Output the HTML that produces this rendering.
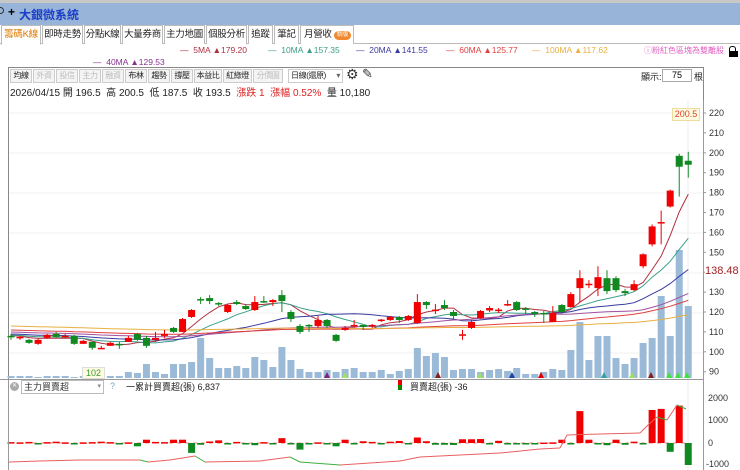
<!DOCTYPE html>
<html><head><meta charset="utf-8">
<style>
*{margin:0;padding:0;box-sizing:border-box}
body{width:740px;height:470px;overflow:hidden;background:#fff;font-family:"Liberation Sans","Noto Sans CJK TC",sans-serif;position:relative}
.a{position:absolute;white-space:nowrap}
#top{left:0;top:0;width:740px;height:3px;background:#c8c8c8}
#bar{left:0;top:3px;width:740px;height:22px;background:#98b4d8}
#tabs{left:0;top:25px;width:740px;height:19px;border-bottom:1px solid #bbb}
.tab{position:absolute;top:25px;height:19px;border:1px solid #bbb;border-bottom:none;font-size:9.5px;line-height:17px;text-align:center;color:#222;background:#fff;white-space:nowrap;overflow:hidden;letter-spacing:-0.3px}
.tb{position:absolute;top:69px;height:14px;border:1px solid #ccc;background:#f4f4f4;font-size:8px;line-height:12px;text-align:center;color:#222;white-space:nowrap;overflow:hidden;letter-spacing:-0.4px}
.tb.d{color:#bbb}
</style></head><body>
<div class="a" id="top"></div>
<div class="a" id="bar"></div>
<div class="a" style="left:-3px;top:7px;width:7px;height:7px;border:1.5px solid #333;border-radius:50%"></div>
<div class="a" style="left:8px;top:5px;font-size:12px;font-weight:bold;color:#000">+</div>
<div class="a" style="left:19px;top:6px;font-size:12px;font-weight:bold;color:#1a3ec8">大銀微系統</div>
<div class="a" id="tabs"></div>
<div class="tab" style="left:1px;width:40px;color:#e07a00;border-bottom:1px solid #fff;height:20px">籌碼K線</div>
<div class="tab" style="left:42px;width:41px">即時走勢</div>
<div class="tab" style="left:84px;width:37px">分點K線</div>
<div class="tab" style="left:122px;width:41px">大量券商</div>
<div class="tab" style="left:164px;width:41px">主力地圖</div>
<div class="tab" style="left:206px;width:41px">個股分析</div>
<div class="tab" style="left:248px;width:25px">追蹤</div>
<div class="tab" style="left:274px;width:25px">筆記</div>
<div class="tab" style="left:300px;width:54px;text-align:left;padding-left:3px">月營收<span style="display:inline-block;background:#f08a30;color:#fff;font-size:6px;line-height:9px;border-radius:5px;padding:0 3px;margin-left:2px;vertical-align:1px">新版</span></div>

<div class="a" style="top:45px;left:180px;font-size:8.5px;color:#b03040">— &nbsp;5MA <span>▲179.20</span></div>
<div class="a" style="top:45px;left:268px;font-size:8.5px;color:#3aa08a">— &nbsp;10MA ▲157.35</div>
<div class="a" style="top:45px;left:356px;font-size:8.5px;color:#3a3aa0">— &nbsp;20MA ▲141.55</div>
<div class="a" style="top:45px;left:446px;font-size:8.5px;color:#e04040">— &nbsp;60MA ▲125.77</div>
<div class="a" style="top:45px;left:532px;font-size:8.5px;color:#e8b040">— &nbsp;100MA ▲117.62</div>
<div class="a" style="top:45px;left:644px;font-size:8px;color:#e060c0">ⓘ粉紅色區塊為雙離股</div>
<div class="a" style="top:46px;left:729px;width:7px;height:6px;border:1.5px solid #000;border-bottom:none;border-radius:3px 3px 0 0"></div>
<div class="a" style="top:51px;left:729px;width:9px;height:6px;background:#000"></div>
<div class="a" style="top:57px;left:93px;font-size:8.5px;color:#8a3090">— &nbsp;40MA ▲129.53</div>

<div class="a" style="left:8px;top:67px;width:696px;height:313px;border:1px solid #888;border-bottom:none"></div>
<div class="tb" style="left:10px;width:22px">均線</div>
<div class="tb d" style="left:33px;width:22px">外資</div>
<div class="tb d" style="left:56px;width:22px">投信</div>
<div class="tb d" style="left:79px;width:22px">主力</div>
<div class="tb d" style="left:102px;width:22px">融資</div>
<div class="tb" style="left:125px;width:22px">布林</div>
<div class="tb" style="left:148px;width:22px">趨勢</div>
<div class="tb" style="left:171px;width:22px">撐壓</div>
<div class="tb" style="left:194px;width:28px">本益比</div>
<div class="tb" style="left:223px;width:29px">紅綠燈</div>
<div class="tb d" style="left:253px;width:30px">分價圖</div>
<div class="tb" style="left:288px;width:55px;background:#fff;text-align:left;padding-left:2px">日線(還原) <span style="float:right;color:#666;padding-right:2px">▾</span></div>
<div class="a" style="left:346px;top:66px;font-size:14px;color:#333">⚙</div>
<div class="a" style="left:362px;top:66px;font-size:13px;color:#333">✎</div>
<div class="a" style="left:641px;top:70px;font-size:9px;color:#222">顯示:</div>
<div class="a" style="left:662px;top:69px;width:30px;height:13px;border:1px solid #aaa;font-size:9px;text-align:center;line-height:11px">75</div>
<div class="a" style="left:694px;top:70px;font-size:9px;color:#222">根</div>
<div class="a" style="left:10px;top:84px;font-size:10px;color:#222">2026/04/15 開 196.5 &nbsp;高 200.5 &nbsp;低 187.5 &nbsp;收 193.5 &nbsp;<span style="color:#e02020">漲跌 1 &nbsp;漲幅 0.52%</span> &nbsp;量 10,180</div>

<svg class="a" style="left:0;top:0" width="740" height="470" id="s"></svg>
<div class="a" style="left:672px;top:108px;width:28px;height:13px;background:#fffbe0;border:1px solid #eedd99;font-size:9px;color:#e04030;text-align:center;line-height:11px">200.5</div>
<div class="a" style="left:705px;top:265px;font-size:11px;color:#a02020;background:#fff">138.48</div>
<div class="a" style="left:82px;top:367px;width:23px;height:12px;background:#fffbe0;border:1px solid #ddd;font-size:9px;color:#389a38;text-align:center;line-height:10px">102</div>

<div class="a" style="left:0;top:379px;width:704px;height:1px;background:#999"></div>
<div class="a" style="left:8px;top:380px;width:1px;height:90px;background:#999"></div>
<div class="a" style="left:703px;top:100px;width:1px;height:370px;background:#999"></div>
<div class="a" style="left:10px;top:382px;width:9px;height:9px;border-radius:50%;background:#aaa;color:#fff;font-size:6px;text-align:center;line-height:9px">✕</div>
<div class="a" style="left:21px;top:380px;width:83px;height:14px;border:1px solid #bbb;font-size:9px;color:#333;line-height:12px;padding-left:2px">主力買賣超<span style="float:right;color:#888;padding-right:2px;font-size:7px">▾</span></div>
<div class="a" style="left:110px;top:381px;font-size:9px;color:#7ab">?</div>
<div class="a" style="left:126px;top:380px;font-size:9px;color:#222">一累計買賣超(張) 6,837</div>
<div class="a" style="left:398px;top:380px;width:4px;height:5px;background:#e00"></div>
<div class="a" style="left:398px;top:385px;width:4px;height:5px;background:#080"></div>
<div class="a" style="left:410px;top:380px;font-size:9px;color:#222">買賣超(張) -36</div>
<div class="a" style="left:708px;top:393px;font-size:9px;color:#333">2000</div>
<div class="a" style="left:708px;top:415px;font-size:9px;color:#333">1000</div>
<div class="a" style="left:708px;top:438px;font-size:9px;color:#333">0</div>
<div class="a" style="left:706px;top:459px;font-size:9px;color:#333">-1000</div>

<script>
var D=[[108,107.5,109,106],[107,107.5,108,106],[106,104.5,106.5,104],[104,106,106.5,103.5],[107,108.5,109,106.5],[109,107.5,110,107],[108,108,109,107],[108,104,108.5,103.5],[104,105.5,106,104],[105,102,105,101],[102,102,103,101.5],[103,104.5,105,103],[104,103.5,105,101.5],[105,107,108,105],[109,106,109.5,105.5],[107,103,108,102],[106,107,110,105],[108,109,111,107],[112,110,112.5,109.5],[110,116.5,117,110],[117.5,121,121.5,117],[126.5,126,127.5,124],[127,125.5,128.5,124],[124.5,124,125,123],[120,123.5,124,119.5],[125,124,126,123.5],[123,121.5,124,121],[121,125,128,120.5],[125.5,125,128,124.5],[125,126,126.5,123],[128.5,125.5,131,120],[120,116.5,121,115],[113,110,114,109],[113.5,113,114,110],[113,116,118,112],[116,113,116.5,112],[108.5,105.5,109,105],[111,112,113,110.5],[113,113.5,116,112.5],[113.5,112.5,113.5,111],[113.5,113.5,114,112],[116,116.2,116.5,115],[116,117.5,118,115.5],[117.5,116,118,114.5],[116,118,118.5,115.5],[114.5,125,129,114],[125,123.5,125.5,121.5],[120.8,121.2,124,119],[123.5,122,126,121],[120,118,121,116],[108.2,108.8,111,106],[112,115,116,111.5],[117,120.5,121,116.5],[120.8,122,123,120],[120.8,121.2,122,119.5],[123.5,124,126,123],[125,121,125.5,120.5],[121.8,121.2,122.5,119],[120,119,120.5,117.5],[119.5,119,120.5,114.5],[115,119.5,123,115],[123.5,120,124,119],[122.5,129,130,122],[132,137,141,125],[133.8,134.2,136,132],[132,137.5,143,128],[137,130.5,141,129],[137,131,138,130],[130.5,129.5,131.5,128],[131,134,136,130.5],[143,149,149.5,142],[154,163,164,153],[164.8,165.2,171,154],[173,181,181.5,172.5],[198.5,193,199.5,178],[196,194,200.5,187.5]];
var V=[376,376,376,377,376,376,376,377,376,376,377,376,376,372,373,364,372,374,364,364,362,338,358,368,368,366,368,357,360,367,347,360,369,372,372,370,372,369,368,372,372,370,374,371,369,348,356,353,357,370,369,369,372,370,369,371,368,374,374,372,369,370,350,322,360,336,336,358,364,358,343,338,296,336,250,306];
var F=[40,30,50,-30,40,60,30,-50,30,40,60,40,-60,30,-150,150,50,40,150,150,-450,-80,70,120,-60,50,-40,-100,40,-20,220,-20,-300,-10,30,-60,-150,150,-40,80,50,-20,60,90,-60,250,80,-80,-80,-90,170,170,180,-10,100,-10,-30,-20,-40,20,30,150,-60,1450,150,-20,-100,150,-80,60,-30,1500,1550,-400,1700,-1000];
var s='',N=D.length,X=function(i){return 11+i*9.03},Y=function(p){return 113+(220-p)*1.99};
for(var g=113;g<=360;g+=40)s+='<line x1="9" x2="703" y1="'+g+'" y2="'+g+'" stroke="#f2f2f2"/>';
s+='<line x1="688" x2="688" y1="100" y2="470" stroke="#eee"/>';
for(var p=220;p>=90;p-=10){if(p!=140)s+='<text x="709" y="'+(Y(p)+3)+'" font-size="9" fill="#333">'+p+'</text>';s+='<line x1="703" x2="706" y1="'+Y(p)+'" y2="'+Y(p)+'" stroke="#999"/>';}
for(var i=0;i<N;i++)s+='<rect x="'+(X(i)-3.5)+'" y="'+V[i]+'" width="7" height="'+(378-V[i])+'" fill="#9bbad8"/>';
var C=D.map(function(d){return d[1]}),H=[];for(var k=0;k<100;k++)H.push(118-k*0.1);var A=H.concat(C);
var ma=[[5,'#b03040'],[10,'#3aa08a'],[20,'#3a3aa0'],[40,'#a050a0'],[60,'#e04040'],[100,'#e8b040']];
ma.forEach(function(m){var pts=[];for(var i=0;i<N;i++){var j=i+100,t=0;for(var q=0;q<m[0];q++)t+=A[j-q];pts.push(X(i).toFixed(1)+','+Y(t/m[0]).toFixed(1))}s+='<polyline fill="none" stroke="'+m[1]+'" stroke-width="1" points="'+pts.join(' ')+'"/>'});
for(var i=0;i<N;i++){var d=D[i],c=d[1]>=d[0]?'#f00000':'#108a20',t=Y(Math.max(d[0],d[1])),b=Y(Math.min(d[0],d[1]));if(b-t<1.5)b=t+1.5;
s+='<line x1="'+X(i)+'" x2="'+X(i)+'" y1="'+Y(d[2])+'" y2="'+Y(d[3])+'" stroke="'+c+'"/><rect x="'+(X(i)-3.5)+'" y="'+t+'" width="7" height="'+(b-t)+'" fill="'+c+'"/>'}
var Z=443,K=0.022;s+='<line x1="9" x2="688" y1="'+Z+'" y2="'+Z+'" stroke="#e88" stroke-dasharray="4,4"/>';
for(var i=0;i<N;i++){var f=F[i],c=f>=0?'#f00000':'#108a20',h=Math.abs(f)*K;s+='<rect x="'+(X(i)-3.5)+'" y="'+(f>=0?Z-h:Z)+'" width="7" height="'+Math.max(h,1.5)+'" fill="'+c+'"/>';}
var L=[[9,462],[40,461],[80,460],[140,460],[148,462],[170,460],[195,456],[205,462],[260,461],[290,457],[300,462],[340,465],[370,463],[400,461],[420,457],[460,455],[500,453],[540,449],[560,448],[567,435],[600,434],[640,433],[648,425],[657,417],[667,420],[677,405],[686,409]];
for(var i=1;i<L.length;i++)s+='<line x1="'+L[i-1][0]+'" y1="'+L[i-1][1]+'" x2="'+L[i][0]+'" y2="'+L[i][1]+'" stroke="'+(L[i][1]<=L[i-1][1]?'#e86060':'#40b040')+'"/>';
[[92,'#a0e060'],[327,'#802080'],[345,'#a0e060'],[438,'#802020'],[480,'#a0e060'],[512,'#2040a0'],[541,'#e00000'],[604,'#30a0a0'],[632,'#a0e060'],[651,'#802020'],[669,'#40e040'],[678,'#40e040'],[687,'#40e040']].forEach(function(m){s+='<polygon points="'+(m[0]-3)+',378 '+(m[0]+3)+',378 '+m[0]+',372" fill="'+m[1]+'"/>'});
document.getElementById('s').innerHTML=s;
</script>
</body></html>
